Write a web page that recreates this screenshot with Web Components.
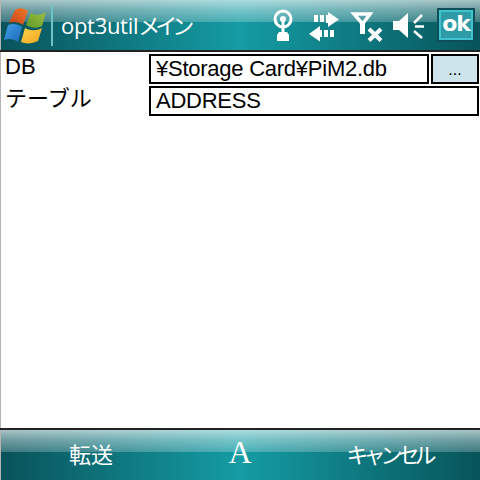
<!DOCTYPE html>
<html lang="ja">
<head>
<meta charset="utf-8">
<title>opt3util</title>
<style>
  html, body { margin: 0; padding: 0; width: 480px; height: 480px; overflow: hidden; background: #fff; }
  body { display: flex; flex-direction: column; font-family: "Liberation Sans", "Noto Sans CJK JP", sans-serif; }
  /* the device font sets katakana tighter than a full em */
  .tight { letter-spacing: -5px; }
</style>
</head>
<body>
<wm-titlebar>opt3util<span class="tight">メイン</span></wm-titlebar>
<wm-form>
  <wm-field label="DB" value="¥Storage Card¥PiM2.db" browse></wm-field>
  <wm-field label="テーブル" value="ADDRESS"></wm-field>
</wm-form>
<wm-softbar>
  <span slot="left">転送</span>
  <span slot="right" class="tight">キャンセル</span>
</wm-softbar>

<script>
// shared glossy chrome used by the top and bottom bars
const CHROME = `
  background:
    linear-gradient(180deg, rgba(255,255,255,.65) 0, rgba(255,255,255,.42) 45%, rgba(255,255,255,.22) 100%) top / 100% 22px no-repeat,
    linear-gradient(90deg, #09525a 0, #159ca4 50%, #07545a 100%);
  box-shadow: inset 1px 0 #b4b4b4;
`;

class WmTitlebar extends HTMLElement {
  constructor() {
    super();
    this.attachShadow({ mode: 'open' });
  }

  connectedCallback() {
    this.shadowRoot.innerHTML = `
      <style>
        :host {
          display: flex;
          align-items: center;
          flex: none;
          height: 50px;
          border-bottom: 2px solid #222;
          ${CHROME}
          color: #fff;
        }
        svg { display: block; flex: none; overflow: visible; }
        .logo { margin-left: 5px; }
        .sep { width: 2px; height: 41px; margin-left: 6px; background: #6cc4c8; flex: none; }
        .title {
          font: 22px "Open Sans", "Noto Sans CJK JP", sans-serif;
          letter-spacing: -.3px;
          margin: -2px 0 0 8px;
          white-space: nowrap;
          flex: 1;
        }
        .tray { display: flex; align-items: center; margin-right: 5px; }
        .ok {
          box-sizing: border-box;
          width: 38px;
          height: 34px;
          margin: -1px 0 0 9px;
          border: 2px solid #0d4f58;
          display: flex;
        }
        .ok span {
          flex: 1;
          border: 2px solid #3fc3cf;
          background: #2f9ba6;
          color: #fff;
          font: bold 22px/24px "DejaVu Sans", sans-serif;
          text-align: center;
          letter-spacing: -1px;
        }
      </style>
      <svg class="logo" width="40" height="50" viewBox="5 0 40 50">
        <defs>
          <linearGradient id="r" x1="0" y1="1" x2="1" y2="0"><stop offset="0" stop-color="#c8401a"/><stop offset="1" stop-color="#ee7a2a"/></linearGradient>
          <linearGradient id="g" x1="0" y1="1" x2="1" y2="0"><stop offset="0" stop-color="#5f9a2a"/><stop offset="1" stop-color="#9cc040"/></linearGradient>
          <linearGradient id="b" x1="0" y1="0" x2="1" y2="1"><stop offset="0" stop-color="#3fa0e8"/><stop offset="1" stop-color="#1f68b8"/></linearGradient>
          <linearGradient id="y" x1="0" y1="0" x2="1" y2="1"><stop offset="0" stop-color="#fbd24a"/><stop offset="1" stop-color="#f2a420"/></linearGradient>
        </defs>
        <path fill="url(#r)" d="M15 10 C19 7 24 8 28 11 L23 25 C19 22 14 21 9 23 Z"/>
        <path fill="url(#g)" d="M31 13 C36 16 41 15 46 12 L42 26 C37 29 31 28 26 25 Z"/>
        <path fill="url(#b)" d="M8 25 C13 23 18 24 22 27 L18 42 C14 39 9 38 4 40 Z"/>
        <path fill="url(#y)" d="M25 28 C30 31 37 31 42 28 L38 41 C32 44 26 44 21 42 Z"/>
      </svg>
      <div class="sep"></div>
      <div class="title"><slot></slot></div>
      <div class="tray">
        <!-- antenna -->
        <svg width="30" height="50" viewBox="270 0 30 50" fill="none" stroke="#fff">
          <circle cx="283" cy="19" r="8" stroke-width="3"/>
          <circle cx="283" cy="19" r="3" fill="#fff" stroke="none"/>
          <path fill="#fff" stroke="none" d="M281.500 19h3v14h-3zM279 32h8l2 3v6h-12v-6z"/>
        </svg>
        <!-- sync arrows -->
        <svg width="40" height="50" viewBox="305 0 40 50" fill="#fff" style="margin-left:5px">
          <path d="M314 15h4v7h-4zM320 15h4v7h-4zM326 15h2v-3l11 7.500-11 7.500v-4h-2z"/>
          <path d="M334 30h-4v7h4zM328 30h-4v7h4zM322 30h-2v-4l-11 8 11 7.500v-4.500h2z"/>
        </svg>
        <!-- no signal -->
        <svg width="38" height="50" viewBox="348 0 38 50" style="margin-left:3px">
          <path fill="none" stroke="#fff" stroke-width="3.500" d="M354 14h16l-7.500 10z"/>
          <path fill="#fff" d="M360 22h5v12h-5z"/>
          <path fill="none" stroke="#fff" stroke-width="4" d="M369 29l12 11.500M381 29l-12 11.500"/>
        </svg>
        <!-- muted speaker -->
        <svg width="38" height="50" viewBox="390 0 38 50" fill="#fff" style="margin-left:4px">
          <path d="M393 21h6l9-8v25l-9-8h-6z"/>
          <path fill="none" stroke="#fff" stroke-width="2.500" d="M414 23l8-8M415 26.500h9M414 31l8 7"/>
        </svg>
        <div class="ok"><span>ok</span></div>
      </div>
    `;
  }
}

class WmForm extends HTMLElement {
  constructor() {
    super();
    this.attachShadow({ mode: 'open' });
    this.shadowRoot.innerHTML = `
      <style>
        :host {
          display: flex;
          flex-direction: column;
          flex: 1;
          gap: 2px;
          padding: 2px 1px 0 0;
          background: #fff;
          border-left: 1px solid #b4b4b4;
        }
      </style>
      <slot></slot>
    `;
  }
}

class WmField extends HTMLElement {
  constructor() {
    super();
    this.attachShadow({ mode: 'open' });
  }

  connectedCallback() {
    const browse = this.hasAttribute('browse');
    this.shadowRoot.innerHTML = `
      <style>
        :host {
          display: flex;
          height: 30px;
          color: #000;
          font: 22px "Liberation Sans", "Noto Sans CJK JP", sans-serif;
        }
        .label { width: 148px; padding-left: 4px; box-sizing: border-box; line-height: 26px; flex: none; white-space: nowrap; }
        .input {
          flex: 1;
          box-sizing: border-box;
          border: 2px solid #000;
          padding-left: 5px;
          line-height: 26px;
          letter-spacing: -.25px;
          white-space: nowrap;
          overflow: hidden;
        }
        .btn {
          width: 48px;
          margin-left: 2px;
          box-sizing: border-box;
          border: 2px solid #000;
          background: #cde4ec;
          text-align: center;
          font-size: 16px;
          line-height: 28px;
          flex: none;
        }
      </style>
      <div class="label">${this.getAttribute('label')}</div>
      <div class="input">${this.getAttribute('value')}</div>
      ${browse ? '<div class="btn">...</div>' : ''}
    `;
  }
}

class WmSoftbar extends HTMLElement {
  constructor() {
    super();
    this.attachShadow({ mode: 'open' });
    this.shadowRoot.innerHTML = `
      <style>
        :host {
          display: grid;
          grid-template-columns: 182px 1fr 182px;
          align-items: center;
          flex: none;
          height: 50px;
          border-top: 2px solid #222;
          ${CHROME}
          color: #fff;
          font: 22px/50px "Noto Sans CJK JP", sans-serif;
          text-align: center;
        }
        .key { margin-top: -4px; }
        .sip { font: 32px/50px "Liberation Serif", serif; margin-top: -6px; }
      </style>
      <div class="key"><slot name="left"></slot></div>
      <div class="sip">A</div>
      <div class="key"><slot name="right"></slot></div>
    `;
  }
}

customElements.define('wm-titlebar', WmTitlebar);
customElements.define('wm-form', WmForm);
customElements.define('wm-field', WmField);
customElements.define('wm-softbar', WmSoftbar);
</script>
</body>
</html>
